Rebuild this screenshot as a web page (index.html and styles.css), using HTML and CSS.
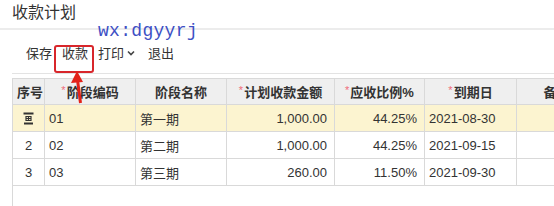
FILE: index.html
```html
<!DOCTYPE html>
<html lang="zh">
<head>
<meta charset="utf-8">
<link rel="stylesheet" href="styles.css">
</head>
<body>
<div class="page">
  <div class="title">收款计划</div>
  <div class="toolbar">
    <span class="btn">保存</span>
    <span class="btn">收款</span>
    <span class="btn drop">打印<svg class="chev" width="8" height="6" viewBox="0 0 8 6"><path d="M1 1.5 L4 4.5 L7 1.5" fill="none" stroke="#444" stroke-width="1.6"/></svg></span>
    <span class="btn exit">退出</span>
  </div>
  <div class="grid">
    <table>
      <colgroup>
        <col style="width:32px"><col style="width:91px"><col style="width:91px"><col style="width:108px"><col style="width:90px"><col style="width:92px"><col style="width:80px">
      </colgroup>
      <thead>
        <tr>
          <th>序号</th>
          <th><i>*</i>阶段编码</th>
          <th>阶段名称</th>
          <th><i>*</i>计划收款金额</th>
          <th><i>*</i>应收比例%</th>
          <th><i>*</i>到期日</th>
          <th>备注</th>
        </tr>
      </thead>
      <tbody>
        <tr class="cur">
          <td class="c"><svg width="11" height="13" viewBox="0 0 11 13"><path d="M0.5 1.5 H10.5 M1 11.5 H10" stroke="#333" stroke-width="1.8"/><path d="M3 4.5 H8 V8.5 H3 Z M5.5 4.5 V8.5 M3 6.5 H8" fill="none" stroke="#333" stroke-width="1.2"/></svg></td>
          <td>01</td><td>第一期</td><td class="r">1,000.00</td><td class="r">44.25%</td><td>2021-08-30</td><td></td>
        </tr>
        <tr>
          <td class="c">2</td><td>02</td><td>第二期</td><td class="r">1,000.00</td><td class="r">44.25%</td><td>2021-09-15</td><td></td>
        </tr>
        <tr>
          <td class="c">3</td><td>03</td><td>第三期</td><td class="r">260.00</td><td class="r">11.50%</td><td>2021-09-30</td><td></td>
        </tr>
      </tbody>
    </table>
  </div>
  <div class="wm">wx:dgyyrj</div>
  <div class="hl"></div>
  <svg class="arrow" width="20" height="36" viewBox="0 0 20 36"><path d="M7 1 L1 13 L13 12 Z" fill="#e2231a"/><path d="M7.5 10 L10.5 33" stroke="#e2231a" stroke-width="3"/></svg>
</div>
</body>
</html>
```
FILE: styles.css
```css
html, body { margin: 0; padding: 0; background: #fff; }
.page {
  position: relative;
  width: 554px;
  height: 206px;
  overflow: hidden;
  font-family: "Liberation Sans", "Noto Sans CJK SC", sans-serif;
  color: #333;
}
.title {
  height: 28px;
  padding-left: 12px;
  font-size: 16px;
  line-height: 26px;
  color: #333;
  border-bottom: 2px solid #ececec;
}
.toolbar {
  margin-left: 12px;
  height: 41px;
  display: flex;
  align-items: center;
  padding-top: 2px;
  padding-left: 9px;
  border-bottom: 1px solid #e3e3e3;
  font-size: 13px;
  color: #333;
}
.btn { padding: 0 5px; display: inline-flex; align-items: center; }
.chev { margin-left: 3px; }
.exit { margin-left: 3px; }
.grid {
  margin-left: 12px;
  margin-top: 4px;
  height: 133px;
  border-left: 1px solid #d9d9d9;
}
table {
  border-collapse: collapse;
  table-layout: fixed;
  width: 584px;
  font-size: 13px;
  margin-left: -1px;
}
th, td {
  border: 1px solid #d9d9d9;
  padding: 0 4px;
  white-space: nowrap;
  overflow: hidden;
}
th {
  height: 25px;
  background: #efefef;
  font-weight: bold;
  text-align: center;
  color: #333;
}
th i { font-style: normal; color: #f06c7a; font-weight: normal; font-size: 11px; vertical-align: 3px; margin-right: 1px; }
td { height: 26px; color: #333; }
td.c { text-align: center; padding: 0; }
td.c svg { display: block; margin: 0 auto; }
td.r { text-align: right; padding-right: 7px; }
tr.cur td { background: #fcf4d0; }
.wm {
  position: absolute;
  left: 98px;
  top: 21px;
  font-family: "Liberation Mono", monospace;
  font-size: 18px;
  color: #3d4fc4;
  letter-spacing: 0.3px;
}
.hl {
  position: absolute;
  left: 54px;
  top: 45px;
  width: 36px;
  height: 24px;
  border: 2px solid #d8262b;
  border-radius: 3px;
}
.arrow { position: absolute; left: 70px; top: 70px; }
```
